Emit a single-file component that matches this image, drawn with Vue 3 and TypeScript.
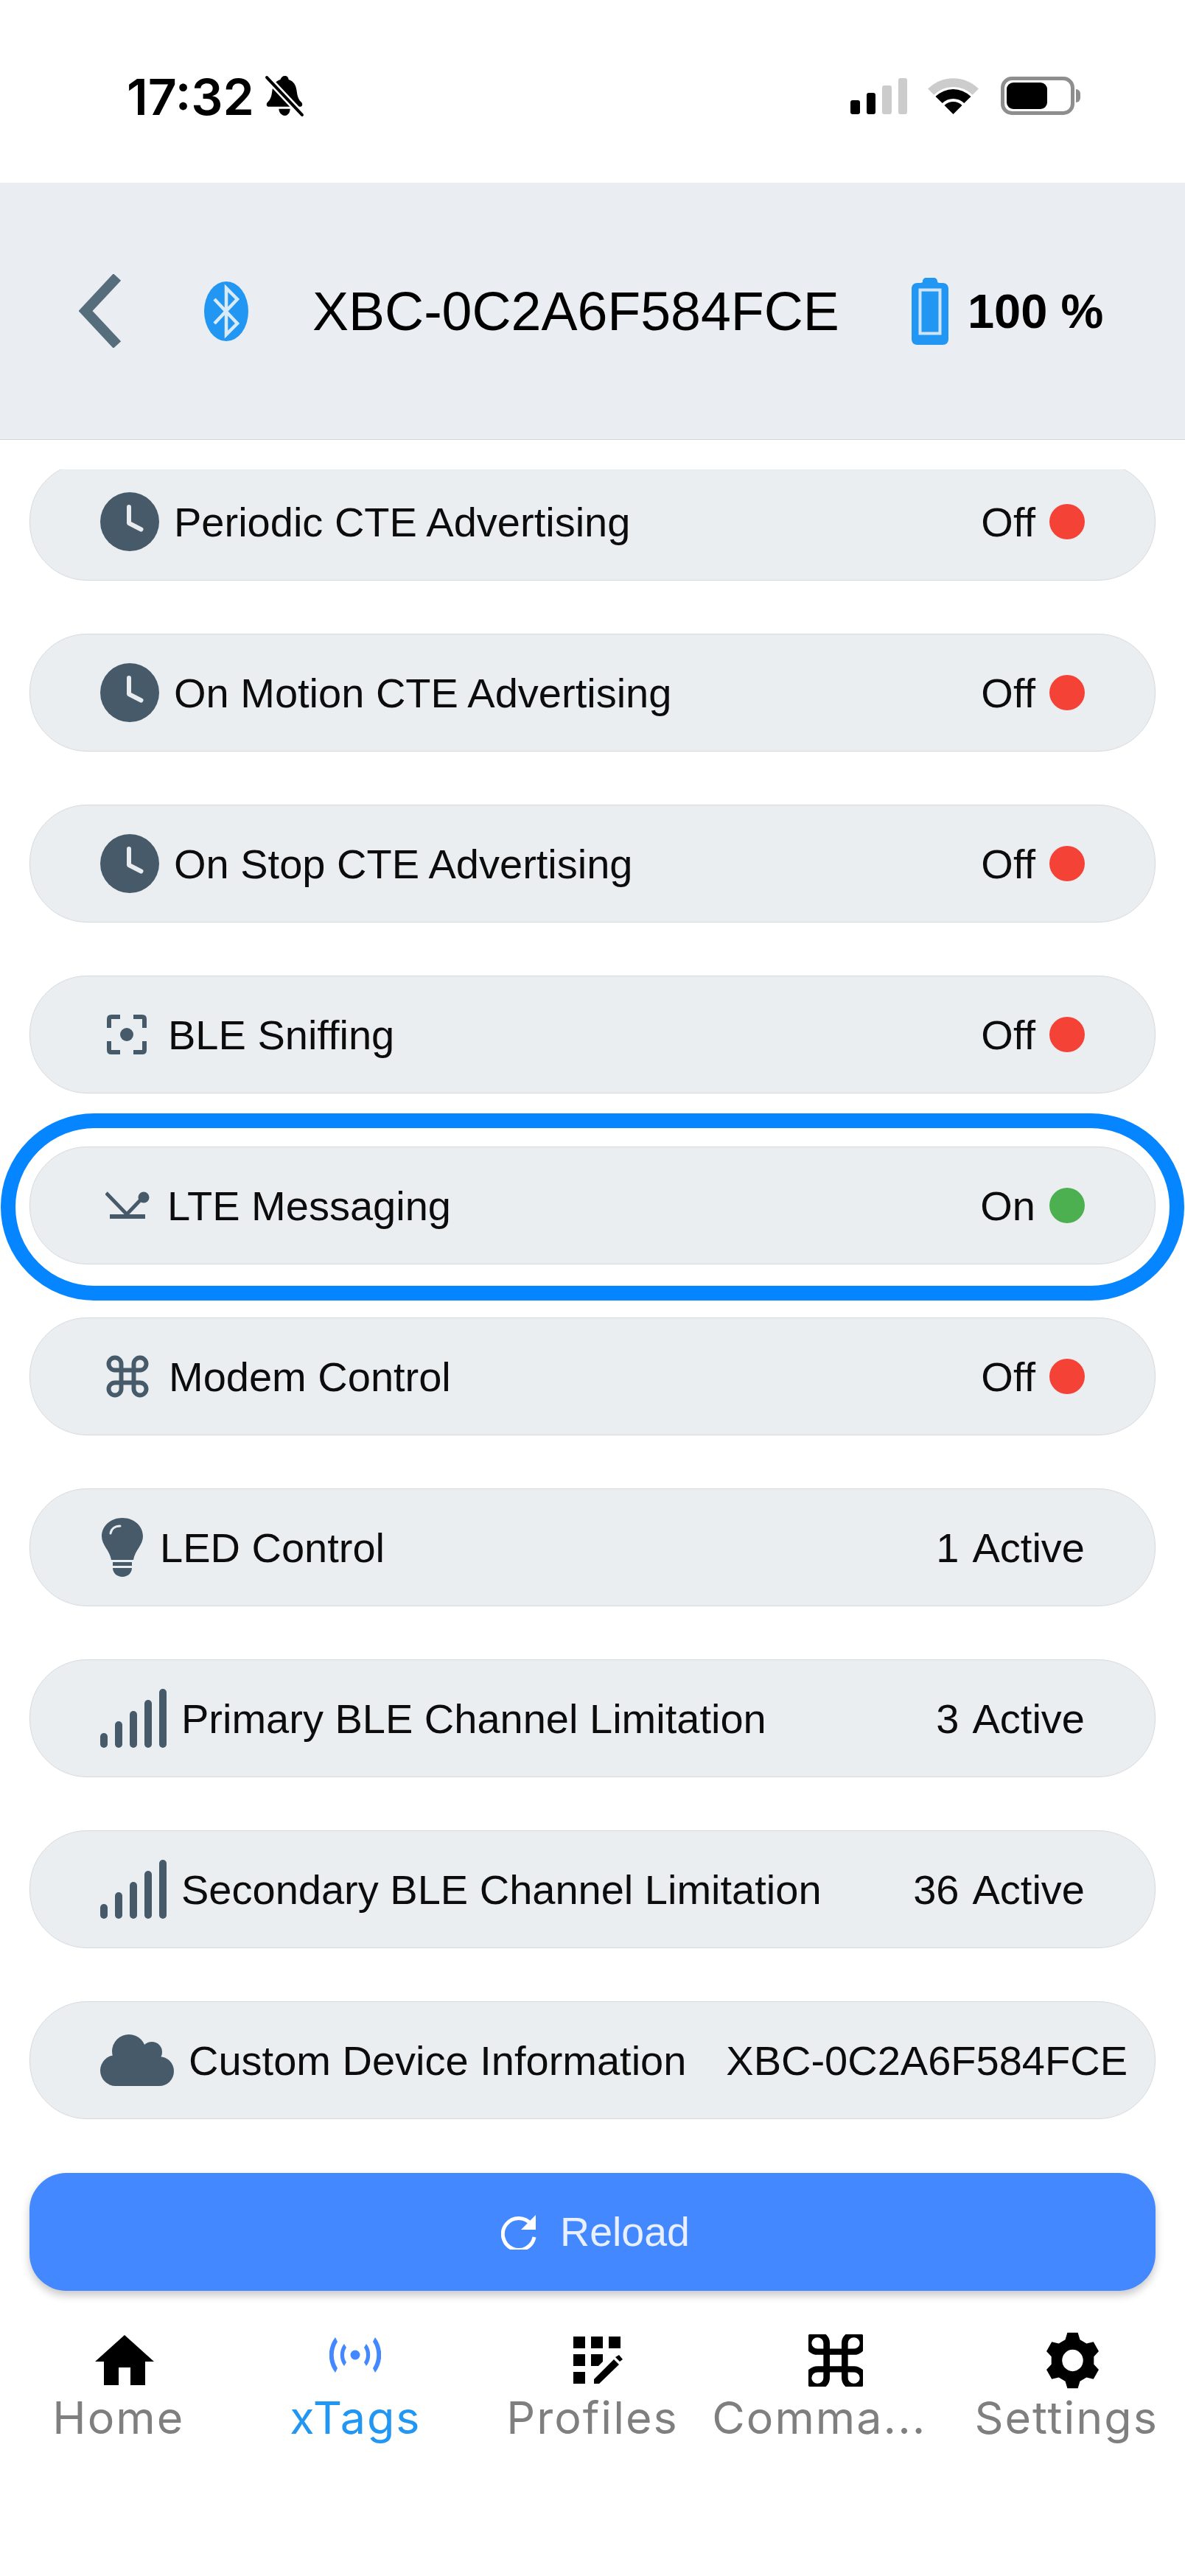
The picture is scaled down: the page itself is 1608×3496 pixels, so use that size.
<template>
  <div class="phone">
    <div class="status-bar">
      <div class="status-left">
        <span class="time">17:32</span>
        <svg class="bell" viewBox="0 0 51 57">
          <path d="M26 1c3 0 5 2 5 5 7 2 10 8 11 16 1 8 3 11 6 14 2 2 2 6-2 6H5c-4 0-4-4-2-6 3-3 5-6 6-14 1-8 4-14 11-16 1-3 3-5 6-5zM18 45h15c0 5-3 9-7 9s-8-4-8-9z" fill="#000" />
          <path d="M2 3l47 50" stroke="#fff" stroke-width="9" />
          <path d="M2 3l47 50" stroke="#000" stroke-width="4" stroke-linecap="round" />
        </svg>
      </div>
      <div class="status-right">
        <div class="cell-bars">
          <span class="cell b1"></span>
          <span class="cell b2"></span>
          <span class="cell b3 dim"></span>
          <span class="cell b4 dim"></span>
        </div>
        <svg class="wifi" viewBox="0 0 69 49">
          <path d="M0 14.400A49 49 0 0 1 69 14.400L60.700 22.800A37 37 0 0 0 8.300 22.800z" fill="#ccc" />
          <path d="M10.500 25A34 34 0 0 1 58.500 25L49.300 34.100A21 21 0 0 0 19.700 34.100z" fill="#000" />
          <path d="M22.500 37A17 17 0 0 1 46.500 37L34.500 49z" fill="#000" />
        </svg>
        <div class="phone-battery">
          <div class="phone-battery-fill"></div>
        </div>
        <span class="phone-battery-nub"></span>
      </div>
    </div>

    <header class="top-bar">
      <svg class="chevron" viewBox="0 0 58 100">
        <path d="M52 4L9 50l43 46" fill="none" stroke="#566e7c" stroke-width="14" />
      </svg>
      <svg class="bt" viewBox="0 0 60 81">
        <ellipse cx="30" cy="40.500" rx="30" ry="40.500" fill="#2196f3" />
        <path d="M14 24l31 33-15 15V9l15 15-31 33" fill="none" stroke="#d9ebf9" stroke-width="4.500" />
      </svg>
      <span class="device-name">XBC-0C2A6F584FCE</span>
      <svg class="tag-battery" viewBox="0 0 50 91">
        <path d="M15 5c0-3 2-5 5-5h10c3 0 5 2 5 5 0 1 1 2 3 2h4c5 0 8 3 8 8v68c0 5-3 8-8 8H8c-5 0-8-3-8-8V15c0-5 3-8 8-8h4c2 0 3-1 3-2z" fill="#2196f3" />
        <rect x="11.500" y="16.500" width="27" height="59" fill="none" stroke="#cfe5f7" stroke-width="4" />
      </svg>
      <span class="percent">100 %</span>
    </header>

    <main class="list-clip">
      <div class="list">
        <div v-for="row in rows" :key="row.label" class="row" :class="{ 'row-wide': row.wide }">
          <svg v-if="row.icon === 'clock'" class="ic ic-clock" viewBox="0 0 80 80">
            <circle cx="40" cy="40" r="40" fill="#465a69" />
            <path d="M39 20v22l16.500 8.500" fill="none" stroke="#e9ecef" stroke-width="6" stroke-linecap="round" stroke-linejoin="round" />
          </svg>
          <svg v-else-if="row.icon === 'sniff'" class="ic ic-sniff" viewBox="0 0 54 54">
            <path d="M3 18V6q0-3 3-3h12M36 3h12q3 0 3 3v12M3 36v12q0 3 3 3h12M51 36v12q0 3-3 3H36" fill="none" stroke="#465a69" stroke-width="6" />
            <circle cx="27" cy="27" r="9" fill="#465a69" />
          </svg>
          <svg v-else-if="row.icon === 'lte'" class="ic ic-lte" viewBox="0 0 60 38">
            <path d="M1 2l28 29L51 8" fill="none" stroke="#465a69" stroke-width="5" />
            <circle cx="52" cy="8" r="7.500" fill="#465a69" />
            <rect x="6" y="31" width="48" height="6" fill="#465a69" />
          </svg>
          <svg v-else-if="row.icon === 'cmd'" class="ic ic-cmd" viewBox="0 0 24 24">
            <path :d="commandPath" fill="none" stroke="#465a69" stroke-width="2.100" />
          </svg>
          <svg v-else-if="row.icon === 'bulb'" class="ic ic-bulb" viewBox="0 0 56 80">
            <path d="M28 0c16 0 28 11 28 25 0 12-11 19-13 32H13C11 44 0 37 0 25 0 11 12 0 28 0z" fill="#465a69" />
            <path d="M12 21c1-6 6-10 13-10" fill="none" stroke="#e9ecef" stroke-width="3" stroke-linecap="round" />
            <rect x="15" y="60" width="26" height="5" fill="#465a69" />
            <path d="M15 68h26c0 7-6 12-13 12s-13-5-13-12z" fill="#465a69" />
          </svg>
          <svg v-else-if="row.icon === 'signal'" class="ic ic-signal" viewBox="0 0 90 80">
            <rect x="0" y="60" width="10" height="20" rx="5" fill="#465a69" />
            <rect x="20" y="44" width="10" height="36" rx="5" fill="#465a69" />
            <rect x="40" y="30" width="10" height="50" rx="5" fill="#465a69" />
            <rect x="60" y="15" width="10" height="65" rx="5" fill="#465a69" />
            <rect x="80" y="0" width="10" height="80" rx="5" fill="#465a69" />
          </svg>
          <svg v-else-if="row.icon === 'cloud'" class="ic ic-cloud" viewBox="0 0 100 70" fill="#465a69">
            <circle cx="39" cy="23" r="23" />
            <circle cx="70" cy="24" r="14" />
            <circle cx="21" cy="49" r="21" />
            <circle cx="80" cy="50" r="20" />
            <rect x="21" y="24" width="59" height="46" />
          </svg>

          <span class="label">{{ row.label }}</span>

          <div v-if="row.on !== undefined" class="state">
            <span>{{ row.on ? 'On' : 'Off' }}</span>
            <span class="dot" :class="row.on ? 'dot-on' : 'dot-off'"></span>
          </div>
          <div v-else-if="row.count" class="state state-count">
            <span>{{ row.count }}</span>
            <span>Active</span>
          </div>
          <div v-else class="state">{{ row.value }}</div>

          <div v-if="row.ring" class="ring"></div>
        </div>
      </div>
    </main>

    <div class="reload-wrap">
      <button class="reload">
        <svg class="reload-ic" viewBox="0 0 50 48">
          <path d="M41 14A21.500 21.500 0 1 0 45 31" fill="none" stroke="#fff" stroke-width="5" />
          <path d="M47 1v20H27z" fill="#fff" />
        </svg>
        Reload
      </button>
    </div>

    <nav class="tabs">
      <div class="tab">
        <div class="tab-icon"><svg class="t-home" viewBox="2 3 20 17"><path d="M10 20v-6h4v6h5v-8h3L12 3 2 12h3v8z" /></svg></div>
        <span class="tab-label">Home</span>
      </div>
      <div class="tab active">
        <div class="tab-icon">
          <svg class="t-tags" viewBox="0 0 70 48" fill="#4488ff">
            <circle cx="35" cy="24" r="6.500" />
            <path d="M8 0C-3 14-3 34 8 48l3-6C4 31 4 17 11 6zM62 0c11 14 11 34 0 48l-3-6c7-11 7-25 0-36zM20 9c-7 8-7 22 0 30l3-5c-4-6-4-14 0-20zM50 9c7 8 7 22 0 30l-3-5c4-6 4-14 0-20z" />
          </svg>
        </div>
        <span class="tab-label">xTags</span>
      </div>
      <div class="tab">
        <div class="tab-icon">
          <svg class="t-prof" viewBox="0 0 68 64">
            <rect x="0" y="0" width="16" height="16" />
            <rect x="24" y="0" width="16" height="16" />
            <rect x="48" y="0" width="16" height="16" />
            <rect x="0" y="24" width="16" height="16" />
            <path d="M24 24h16v10l-6 6H24z" />
            <rect x="0" y="48" width="16" height="16" />
            <path d="M28 64v-6l27-27 7 7-27 26zM57 28l5-3 5 6-4 3z" />
          </svg>
        </div>
        <span class="tab-label">Profiles</span>
      </div>
      <div class="tab">
        <div class="tab-icon">
          <svg class="t-cmd" viewBox="3 3 18 18" preserveAspectRatio="none">
            <path :d="commandPath" fill="none" stroke="#000" stroke-width="2.100" />
          </svg>
        </div>
        <span class="tab-label tab-label-cut">Comma...</span>
      </div>
      <div class="tab">
        <div class="tab-icon"><svg class="t-gear" viewBox="0 0 100 100" preserveAspectRatio="none"><path :d="gearPath" fill-rule="evenodd" /></svg></div>
        <span class="tab-label">Settings</span>
      </div>
    </nav>
  </div>
</template>

<script setup lang="ts">
interface Row {
  icon: string
  label: string
  on?: boolean
  count?: string
  value?: string
  wide?: boolean
  ring?: boolean
}

const rows: Row[] = [
  { icon: 'clock', label: 'Periodic CTE Advertising', on: false },
  { icon: 'clock', label: 'On Motion CTE Advertising', on: false },
  { icon: 'clock', label: 'On Stop CTE Advertising', on: false },
  { icon: 'sniff', label: 'BLE Sniffing', on: false },
  { icon: 'lte', label: 'LTE Messaging', on: true, ring: true },
  { icon: 'cmd', label: 'Modem Control', on: false },
  { icon: 'bulb', label: 'LED Control', count: '1' },
  { icon: 'signal', label: 'Primary BLE Channel Limitation', count: '3' },
  { icon: 'signal', label: 'Secondary BLE Channel Limitation', count: '36' },
  { icon: 'cloud', label: 'Custom Device Information', value: 'XBC-0C2A6F584FCE', wide: true },
]

const commandPath = 'M15 6v12a3 3 0 1 0 3-3H6a3 3 0 1 0 3 3V6a3 3 0 1 0-3 3h12a3 3 0 1 0-3-3'

function polar(r: number, deg: number) {
  const a = (deg * Math.PI) / 180
  return `${(50 + r * Math.cos(a)).toFixed(1)} ${(50 + r * Math.sin(a)).toFixed(1)}`
}

// six teeth, one pointing straight up
const gearPath = (() => {
  const pts: string[] = []
  for (let i = 0; i < 6; i++) {
    const a = i * 60 - 90
    pts.push(polar(39, a - 20), polar(50, a - 11), polar(50, a + 11), polar(39, a + 20))
  }
  return `M${pts.join('L')}ZM69 50a19 19 0 1 0-38 0a19 19 0 1 0 38 0Z`
})()
</script>

<style>
html,
body {
  margin: 0;
  background: #fff;
}
</style>

<style scoped>
.phone {
  width: 1608px;
  height: 3496px;
  background: #fff;
  font-family: "Liberation Sans", Arial, sans-serif;
  color: #000;
  display: flex;
  flex-direction: column;
  overflow: hidden;
}

.status-bar {
  height: 248px;
  flex-shrink: 0;
  display: flex;
  justify-content: space-between;
  align-items: flex-start;
  padding: 102px 142px 0 172px;
  box-sizing: border-box;
}

.status-left {
  display: flex;
  align-items: center;
  gap: 14px;
}

.time {
  font-family: Inter, sans-serif;
  font-size: 68px;
  font-weight: 600;
  line-height: 57px;
}

.bell {
  width: 54px;
  height: 58px;
}

.status-right {
  display: flex;
  align-items: flex-start;
  padding-top: 2px;
}

.cell-bars {
  display: flex;
  align-items: flex-end;
  gap: 9px;
  height: 49px;
  padding-top: 2px;
}

.cell {
  width: 12.500px;
  background: #000;
  border-radius: 3px;
}

.b1 { height: 19px; }
.b2 { height: 29px; }
.b3 { height: 39px; }
.b4 { height: 49px; }

.dim {
  background: #ccc;
}

.wifi {
  width: 69px;
  height: 49px;
  margin: 2px 30px 0 28px;
}

.phone-battery {
  width: 100px;
  height: 52px;
  box-sizing: border-box;
  border: 5px solid #8e8e8e;
  border-radius: 15px;
  padding: 3px;
}

.phone-battery-fill {
  width: 55px;
  height: 36px;
  background: #000;
  border-radius: 9px;
}

.phone-battery-nub {
  width: 6px;
  height: 18px;
  margin: 17px 0 0 2px;
  background: #8e8e8e;
  border-radius: 0 9px 9px 0;
}

.top-bar {
  height: 349px;
  flex-shrink: 0;
  box-sizing: border-box;
  background: #eaedf1;
  border-bottom: 1px solid #d4d6da;
  display: flex;
  align-items: center;
  padding-left: 107px;
}

.chevron {
  width: 58px;
  height: 100px;
}

.bt {
  width: 60px;
  height: 81px;
  margin-left: 112px;
}

.device-name {
  font-size: 73.500px;
  margin-left: 87px;
  white-space: nowrap;
}

.tag-battery {
  width: 50px;
  height: 91px;
  margin-left: 98px;
}

.percent {
  font-size: 65px;
  font-weight: 700;
  margin-left: 26px;
  white-space: nowrap;
}

.list-clip {
  margin-top: 40px;
  height: 2271px;
  flex-shrink: 0;
  overflow: hidden;
}

.list {
  margin-top: -9px;
  padding: 0 40px;
  display: flex;
  flex-direction: column;
  gap: 72px;
}

.row {
  position: relative;
  height: 160px;
  box-sizing: border-box;
  flex-shrink: 0;
  background: #ebeef1;
  border: 1px solid #d6d9dd;
  border-radius: 78px;
  display: flex;
  align-items: center;
  padding: 0 95px;
  font-size: 56px;
  color: #0c0c0c;
}

.row-wide {
  padding-right: 37px;
}

.ic {
  flex-shrink: 0;
}

.ic-clock { width: 80px; height: 80px; margin-right: 20px; }
.ic-sniff { width: 54px; height: 54px; margin: 0 29px 0 9px; }
.ic-lte { width: 60px; height: 38px; margin: 0 24px 0 7px; }
.ic-cmd { width: 68px; height: 68px; margin: 0 22px 0 3px; }
.ic-bulb { width: 56px; height: 80px; margin: 0 23px 0 2px; }
.ic-signal { width: 90px; height: 80px; margin-right: 20px; }
.ic-cloud { width: 100px; height: 70px; margin-right: 20px; }

.label {
  flex: 1;
  white-space: nowrap;
}

.state {
  display: flex;
  align-items: center;
  gap: 19px;
  white-space: nowrap;
}

.state-count {
  gap: 18px;
}

.dot {
  width: 48px;
  height: 48px;
  border-radius: 50%;
}

.dot-on { background: #4caf50; }
.dot-off { background: #f44336; }

.ring {
  position: absolute;
  inset: -46px -40px -50px -40px;
  border: 20px solid #0585ff;
  border-radius: 127px;
  pointer-events: none;
}

.reload-wrap {
  padding: 0 40px;
  margin-top: 41px;
}

.reload {
  width: 100%;
  height: 160px;
  background: #4488ff;
  border: 0;
  border-radius: 50px;
  box-shadow: 0 6px 12px rgba(0, 0, 0, 0.22);
  color: #e8f0ff;
  font-family: inherit;
  font-size: 55.500px;
  display: flex;
  align-items: center;
  justify-content: center;
  gap: 30px;
  padding: 0 0 0 8px;
}

.reload-ic {
  width: 50px;
  height: 48px;
}

.tabs {
  margin-top: 55px;
  display: grid;
  grid-template-columns: repeat(5, 1fr);
}

.tab {
  display: flex;
  flex-direction: column;
  align-items: center;
  min-width: 0;
}

.tab-icon {
  height: 78px;
  display: flex;
  align-items: center;
  justify-content: center;
  margin-bottom: 3px;
}

.tab-label {
  width: 100%;
  text-align: center;
  font-family: Inter, sans-serif;
  font-size: 61px;
  font-weight: 400;
  letter-spacing: 2px;
  line-height: 72px;
  color: #7f7f7f;
  white-space: nowrap;
}

.tab-label-cut {
  text-align: left;
  padding-left: 3px;
}

.active .tab-label {
  color: #2196f3;
}

.t-home { width: 80px; height: 68px; margin-left: 16px; }
.t-tags { width: 70px; height: 48px; margin-bottom: 14px; }
.t-prof { width: 68px; height: 64px; margin-left: 16px; }
.t-cmd { width: 74px; height: 71px; margin-left: 16px; }
.t-gear { width: 75px; height: 77px; margin-left: 16px; }
</style>
